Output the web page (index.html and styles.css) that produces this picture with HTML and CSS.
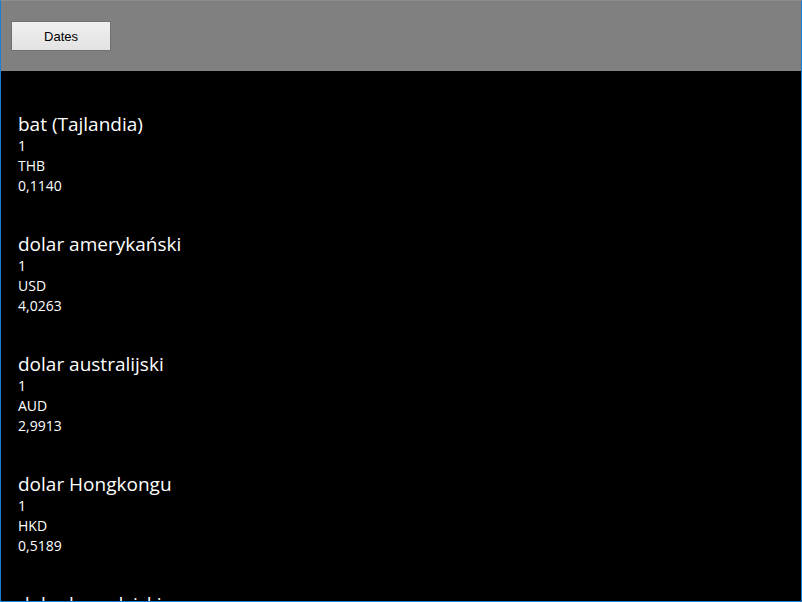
FILE: index.html
```html
<!DOCTYPE html>
<html>
<head>
<meta charset="utf-8">
<link rel="stylesheet" href="styles.css">
</head>
<body>
<div class="window">
  <header class="toolbar">
    <button class="btn">Dates</button>
  </header>
  <main class="list">
    <section class="entry">
      <div class="name">bat (Tajlandia)</div>
      <div class="line">1</div>
      <div class="line">THB</div>
      <div class="line">0,1140</div>
    </section>
    <section class="entry">
      <div class="name">dolar amerykański</div>
      <div class="line">1</div>
      <div class="line">USD</div>
      <div class="line">4,0263</div>
    </section>
    <section class="entry">
      <div class="name">dolar australijski</div>
      <div class="line">1</div>
      <div class="line">AUD</div>
      <div class="line">2,9913</div>
    </section>
    <section class="entry">
      <div class="name">dolar Hongkongu</div>
      <div class="line">1</div>
      <div class="line">HKD</div>
      <div class="line">0,5189</div>
    </section>
    <section class="entry">
      <div class="name">dolar kanadyjski</div>
      <div class="line">1</div>
      <div class="line">CAD</div>
      <div class="line">2,9530</div>
    </section>
  </main>
</div>
</body>
</html>
```

FILE: styles.css
```css
html, body {
  margin: 0;
  padding: 0;
  height: 100%;
  overflow: hidden;
  background: #000;
}
.window {
  box-sizing: border-box;
  height: 602px;
  width: 802px;
  border-left: 1px solid #1a7fd4;
  border-right: 1px solid #1a7fd4;
  border-bottom: 1px solid #1a7fd4;
  border-top: 1px solid #8c8c8c;
  display: flex;
  flex-direction: column;
  overflow: hidden;
  font-family: "Open Sans", "Noto Sans", sans-serif;
  color: #fff;
}
.toolbar {
  flex: 0 0 auto;
  height: 70px;
  background: #808080;
  padding: 20px 0 0 10px;
  box-sizing: border-box;
}
.btn {
  width: 100px;
  height: 30px;
  border: 1px solid #707070;
  background: linear-gradient(#efefef, #e3e3e3);
  font-family: "Liberation Sans", Arial, sans-serif;
  font-size: 13px;
  color: #000;
  padding: 1px 0 0 0;
  margin: 0;
}
.list {
  flex: 1 1 auto;
  padding: 5px 0 0 17px;
}
.entry {
  padding-top: 36px;
}
.name {
  font-size: 19px;
  line-height: 24px;
}
.line {
  font-size: 14px;
  line-height: 20px;
}
```
